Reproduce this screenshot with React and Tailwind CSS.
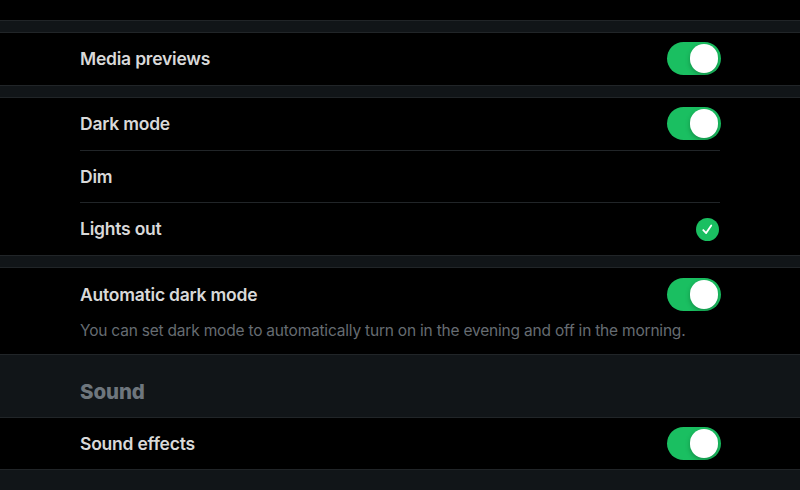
import React, { useState } from 'react';

const Toggle = ({ label, checked, onChange }) => (
  <button
    type="button"
    role="switch"
    aria-checked={checked}
    aria-label={label}
    onClick={() => onChange(!checked)}
    className={`-mr-[0.5px] mb-[0.5px] flex h-[33px] w-[53.5px] shrink-0 items-center rounded-full px-[2.2px] ${
      checked ? 'justify-end bg-[#1abf61]' : 'justify-start bg-[#39393d]'
    }`}
  >
    <span className="size-[28.6px] rounded-full bg-white shadow-[0_2px_5px_rgba(0,0,0,0.25)]" />
  </button>
);

const Row = ({ label, height = 'h-[52px]', children }) => (
  <div className={`flex items-center justify-between ${height}`}>
    <span className="pt-[1px] text-[17.5px] font-semibold tracking-[-0.22px] text-[#d9d9d9]">{label}</span>
    {children}
  </div>
);

const Gap = () => <div className="h-[13px] border-y border-[#212528] bg-[#111518]" />;

const App = () => {
  const [previews, setPreviews] = useState(true);
  const [dark, setDark] = useState(true);
  const [theme, setTheme] = useState('Lights out');
  const [automatic, setAutomatic] = useState(true);
  const [sounds, setSounds] = useState(true);

  return (
    <div className="h-[490px] w-[800px] overflow-hidden bg-black font-['Inter',sans-serif]">
      <div className="h-5" />
      <Gap />
      <section className="px-20">
        <Row label="Media previews">
          <Toggle label="Media previews" checked={previews} onChange={setPreviews} />
        </Row>
      </section>
      <Gap />

      <section className="px-20">
        <Row label="Dark mode">
          <Toggle label="Dark mode" checked={dark} onChange={setDark} />
        </Row>
        {['Dim', 'Lights out'].map((name) => (
          <div key={name} className="border-t border-[#212528]" onClick={() => setTheme(name)}>
            <Row label={name} height={name === 'Dim' ? 'h-[51px]' : 'h-[52px]'}>
              {theme === name && (
                <svg viewBox="0 0 24 24" className="mr-[1px] size-[23px]" fill="none">
                  <circle cx="12" cy="12" r="12" fill="#1abf61" />
                  <path
                    d="M7.6 12.6l3 3.1 5.3-7.8"
                    stroke="#fff"
                    strokeWidth="1.9"
                    strokeLinecap="round"
                    strokeLinejoin="round"
                  />
                </svg>
              )}
            </Row>
          </div>
        ))}
      </section>
      <Gap />

      <section className="h-[86px] px-20">
        <Row label="Automatic dark mode" height="h-[53px]">
          <Toggle label="Automatic dark mode" checked={automatic} onChange={setAutomatic} />
        </Row>
        <p className="whitespace-nowrap text-[15.5px] leading-[19px] tracking-[-0.205px] text-[#666c72]">
          You can set dark mode to automatically turn on in the evening and off in the morning.
        </p>
      </section>

      <header className="flex h-16 items-center border-y border-[#212528] bg-[#111518] px-20 pt-3">
        <h2 className="text-[20.5px] font-extrabold tracking-[-0.1px] text-[#6e767d]">Sound</h2>
      </header>
      <section className="px-20">
        <Row label="Sound effects" height="h-[51px]">
          <Toggle label="Sound effects" checked={sounds} onChange={setSounds} />
        </Row>
      </section>
      <div className="h-8 border-t border-[#212528] bg-[#111518]" />
    </div>
  );
};

export default App;
